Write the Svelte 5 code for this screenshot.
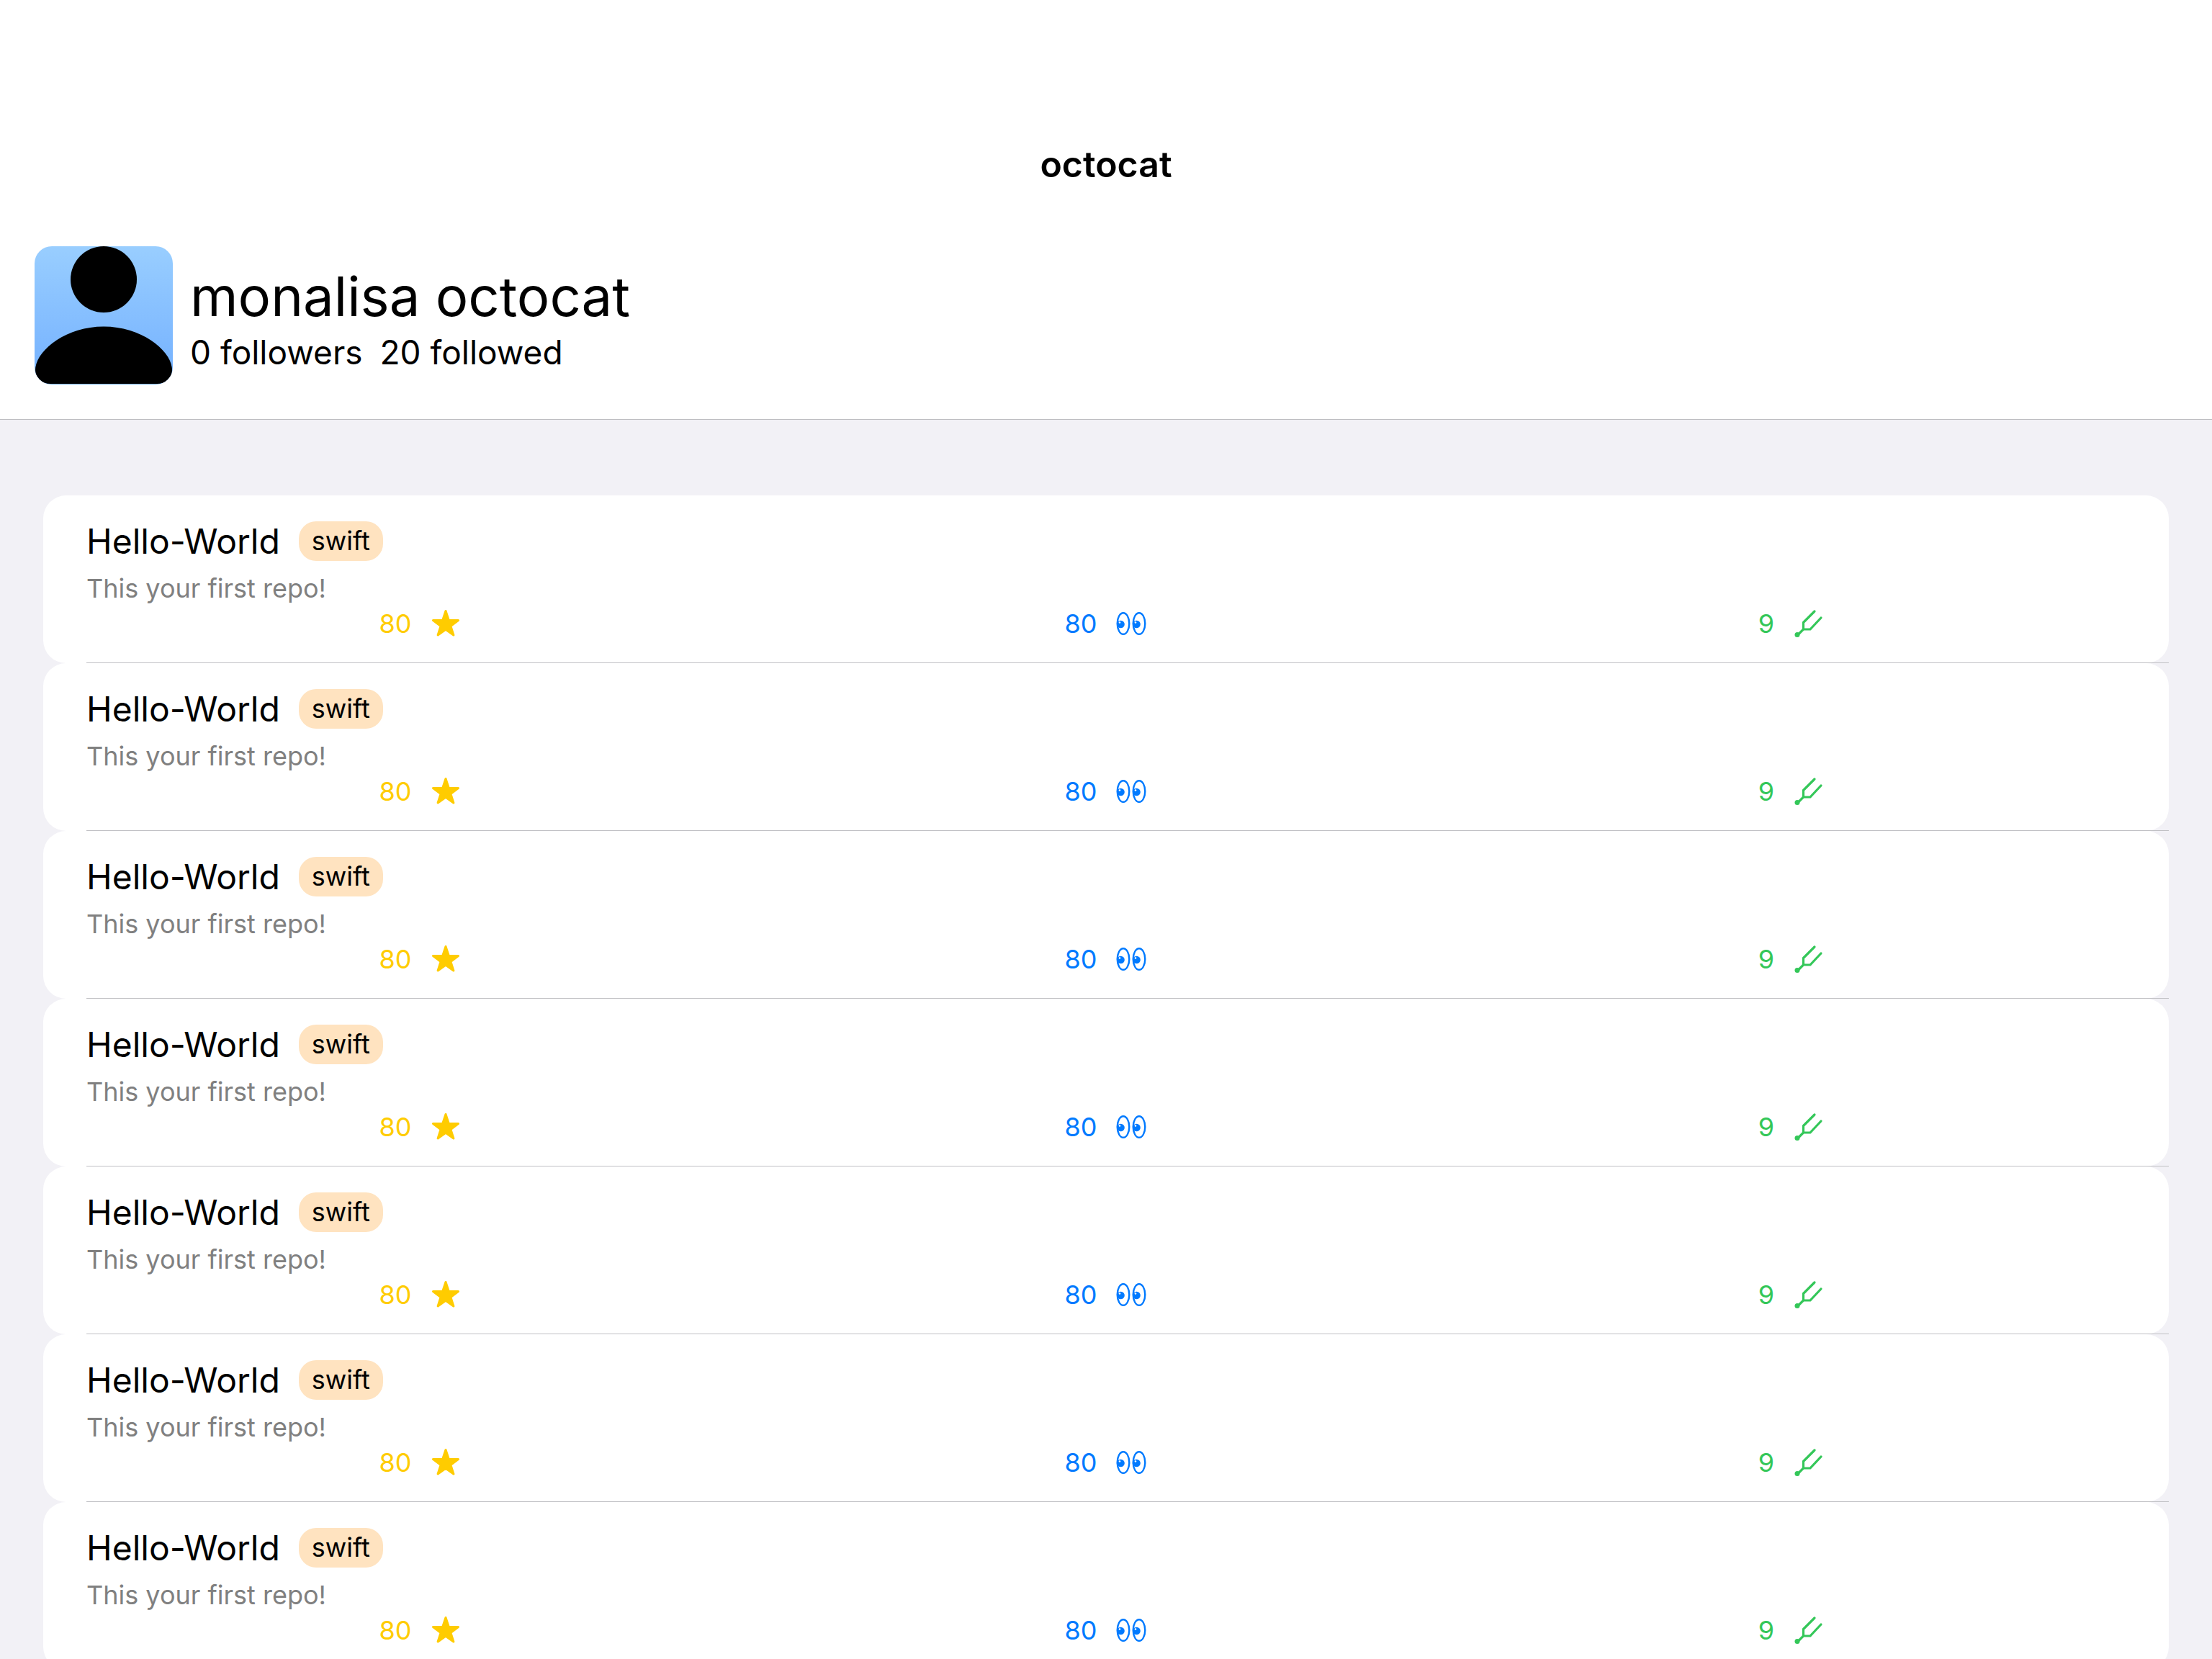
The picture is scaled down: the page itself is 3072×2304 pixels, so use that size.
<script>
  const user = { login: 'octocat', name: 'monalisa octocat', followers: 0, followed: 20 };
  const repos = Array.from({ length: 7 }, (_, id) => ({
    id,
    name: 'Hello-World',
    language: 'swift',
    description: 'This your first repo!',
    stars: 80,
    watchers: 80,
    forks: 9
  }));
</script>

<div class="screen">
  <header>
    <h1>{user.login}</h1>
    <div class="profile">
      <svg class="avatar" viewBox="0 0 192 192" role="img" aria-label="Avatar">
        <defs>
          <linearGradient id="sky" x1="0" y1="0" x2="0" y2="1">
            <stop offset="0" stop-color="#99ceff" />
            <stop offset="1" stop-color="#73b0ff" />
          </linearGradient>
        </defs>
        <rect width="192" height="192" fill="url(#sky)" />
        <circle cx="96" cy="46" r="46" />
        <path d="M96 111.500C150 111.500 191 146 191 172C191 184 182 191 170 191H22C10 191 1 184 1 172C1 146 42 111.500 96 111.500Z" />
      </svg>
      <div class="who">
        <h2>{user.name}</h2>
        <p class="counts">
          <span>{user.followers} followers</span>
          <span>{user.followed} followed</span>
        </p>
      </div>
    </div>
  </header>

  <main>
    <ul>
      {#each repos as repo (repo.id)}
        <li>
          <div class="heading">
            <h3>{repo.name}</h3>
            <span class="tag">{repo.language}</span>
          </div>
          <p class="description">{repo.description}</p>
          <div class="stats">
            <span class="stat stars">
              {repo.stars}
              <svg viewBox="0 0 44 40" aria-hidden="true">
                <path d="M22 2.500L26.300 15.500H39.500L28.900 23.500L32.900 36L22 28.200L11.100 36L15.100 23.500L4.500 15.500H17.700Z" fill="currentColor" stroke="currentColor" stroke-width="3" stroke-linejoin="round" />
              </svg>
            </span>
            <span class="stat watchers">
              {repo.watchers}
              <svg viewBox="0 0 44 40" aria-hidden="true">
                <g fill="none" stroke="currentColor" stroke-width="2.400">
                  <ellipse cx="11" cy="20" rx="8.300" ry="14.800" />
                  <ellipse cx="33" cy="20" rx="8.300" ry="14.800" />
                </g>
                <circle cx="7.500" cy="21" r="5.300" fill="currentColor" />
                <circle cx="29.500" cy="21" r="5.300" fill="currentColor" />
                <circle cx="6" cy="18.500" r="1.300" fill="#fff" />
                <circle cx="28" cy="18.500" r="1.300" fill="#fff" />
              </svg>
            </span>
            <span class="stat forks">
              {repo.forks}
              <svg viewBox="0 0 44 40" aria-hidden="true">
                <path d="M30 3L14.500 18.500V28H24L39 12M14.500 28L7 35.500" fill="none" stroke="currentColor" stroke-width="3.200" stroke-linecap="round" stroke-linejoin="round" />
                <circle cx="6" cy="35.500" r="3.500" fill="currentColor" />
              </svg>
            </span>
          </div>
        </li>
      {/each}
    </ul>
  </main>
</div>

<style>
  :global(body) {
    margin: 0;
    background: #f2f1f6;
  }

  .screen {
    display: flex;
    flex-direction: column;
    height: 100vh;
    overflow: hidden;
    color: #000;
    background: #f2f1f6;
    font-family: Inter, 'Liberation Sans', sans-serif;
  }

  h1,
  h2,
  h3,
  p,
  ul {
    margin: 0;
    padding: 0;
    font-weight: 400;
  }

  header {
    flex: none;
    padding: 198px 48px 48px;
    background: #fff;
    border-bottom: 1px solid #bdbdc1;
  }

  h1 {
    font-size: 50px;
    line-height: 60px;
    font-weight: 600;
    text-align: center;
  }

  .profile {
    display: flex;
    align-items: center;
    gap: 24px;
    margin-top: 84px;
  }

  .avatar {
    flex: none;
    width: 192px;
    height: 192px;
    border-radius: 24px;
  }

  .who {
    padding-top: 6px;
  }

  h2 {
    font-size: 76px;
    line-height: 96px;
  }

  .counts {
    display: flex;
    gap: 24px;
    font-size: 46px;
    line-height: 60px;
  }

  main {
    flex: 1;
    min-height: 0;
    padding: 105px 60px 0;
    overflow-y: auto;
    scrollbar-width: none;
  }

  ul {
    list-style: none;
  }

  li {
    position: relative;
    box-sizing: border-box;
    height: 233px;
    padding: 36px 60px 0;
    background: #fff;
    border-radius: 32px;
  }

  li::after {
    content: '';
    position: absolute;
    right: 0;
    bottom: 0;
    left: 60px;
    height: 1px;
    background: #c0c0c4;
  }

  .heading {
    display: flex;
    align-items: center;
    gap: 26px;
    height: 55px;
  }

  h3 {
    font-size: 48px;
    line-height: 56px;
  }

  .tag {
    padding: 0 18px;
    font-size: 36px;
    line-height: 55px;
    background: #ffe3c0;
    border-radius: 24px;
  }

  .description {
    margin-top: 14px;
    font-size: 36px;
    line-height: 48px;
    color: #808080;
  }

  .stats {
    display: grid;
    grid-template-columns: repeat(3, 1fr);
    gap: 24px;
  }

  .stat {
    display: flex;
    align-items: center;
    justify-content: center;
    gap: 26px;
    font-size: 36px;
    line-height: 50px;
  }

  .stat svg {
    width: 44px;
    height: 40px;
  }

  .stars {
    color: #ffcc00;
  }

  .watchers {
    color: #007aff;
  }

  .forks {
    color: #34c759;
  }
</style>
